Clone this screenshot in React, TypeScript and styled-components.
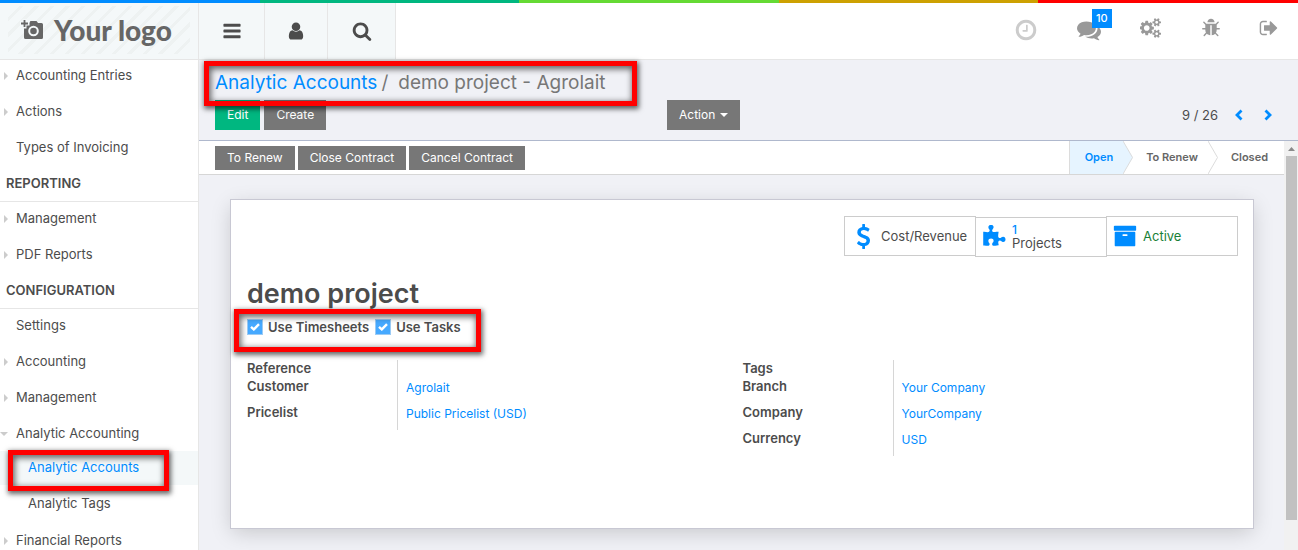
import React from "react";
import styled, { createGlobalStyle, css } from "styled-components";

const Global = createGlobalStyle`
  *, *::before, *::after { box-sizing: border-box; }
  html, body { margin: 0; height: 100%; }
  body {
    font-family: Inter, "Liberation Sans", sans-serif;
    font-size: 13px;
    line-height: 18px;
    color: #4c4c4c;
    background: #fff;
    overflow: hidden;
  }
  #root { height: 100%; }
  a { color: #008cff; text-decoration: none; }
  button { font: inherit; border: 0; margin: 0; padding: 0; cursor: pointer; }
  svg { display: block; flex: none; }
`;

const paths = {
  bars: "M1664 1344v128q0 26-19 45t-45 19h-1408q-26 0-45-19t-19-45v-128q0-26 19-45t45-19h1408q26 0 45 19t19 45zm0-512v128q0 26-19 45t-45 19h-1408q-26 0-45-19t-19-45v-128q0-26 19-45t45-19h1408q26 0 45 19t19 45zm0-512v128q0 26-19 45t-45 19h-1408q-26 0-45-19t-19-45v-128q0-26 19-45t45-19h1408q26 0 45 19t19 45z",
  user: "M1536 1399q0 109-62.5 187t-150.5 78h-854q-88 0-150.5-78t-62.5-187q0-85 8.5-160.5t31.5-152 58.5-131 94-89 134.5-34.5q131 128 313 128t313-128q76 0 134.5 34.5t94 89 58.5 131 31.5 152 8.5 160.5zm-256-887q0 159-112.5 271.5t-271.5 112.5-271.5-112.5-112.5-271.5 112.5-271.5 271.5-112.5 271.5 112.5 112.5 271.5z",
  search: "M1216 832q0-185-131.5-316.5t-316.5-131.5-316.5 131.5-131.5 316.5 131.5 316.5 316.5 131.5 316.5-131.5 131.5-316.5zm512 832q0 52-38 90t-90 38q-54 0-90-38l-343-342q-179 124-399 124-143 0-273.5-55.5t-225-150-150-225-55.5-273.5 55.5-273.5 150-225 225-150 273.5-55.5 273.5 55.5 225 150 150 225 55.5 273.5q0 220-124 399l343 343q37 37 37 90z",
  clock: "M1024 544v448q0 14-9 23t-23 9h-320q-14 0-23-9t-9-23v-64q0-14 9-23t23-9h224v-352q0-14 9-23t23-9h64q14 0 23 9t9 23zm416 352q0-148-73-273t-198-198-273-73-273 73-198 198-73 273 73 273 198 198 273 73 273-73 198-198 73-273zm224 0q0 209-103 385.5t-279.5 279.5-385.5 103-385.5-103-279.5-279.5-103-385.5 103-385.5 279.5-279.5 385.5-103 385.5 103 279.5 279.5 103 385.5z",
  comments: "M1408 768q0 139-94 257t-256.5 186.5-353.5 68.5q-86 0-176-16-124 88-278 128-36 9-86 16h-3q-11 0-20.5-8t-11.5-21q-1-3-1-6.5t.5-6.5 2-6l2.5-5t3.5-5.5 4-5 4.5-5 4-4.5q5-6 23-25t26-29.5 22.5-29 25-38.5 20.5-44q-124-72-195-177t-71-224q0-139 94-257t256.5-186.5 353.5-68.5 353.5 68.5 256.5 186.5 94 257zm384 256q0 120-71 224.5t-195 176.5q10 24 20.5 44t25 38.5 22.5 29 26 29.5 23 25q1 1 4 4.5t4.5 5 4 5 3.5 5.5l2.5 5t2 6 .5 6.5-1 6.5q-3 14-13 22t-22 7q-50-7-86-16-154-40-278-128-90 16-176 16-271 0-472-132 58 4 88 4 161 0 309-45t264-129q125-92 192-212t67-254q0-77-23-152 129 71 204 178t75 230z",
  cogs: "M832 896q0-106-75-181t-181-75-181 75-75 181 75 181 181 75 181-75 75-181zm768 512q0-52-38-90t-90-38-90 38-38 90q0 53 37.5 90.5t90.5 37.5 90.5-37.5 37.5-90.5zm0-1024q0-52-38-90t-90-38-90 38-38 90q0 53 37.5 90.5t90.5 37.5 90.5-37.5 37.5-90.5zm-384 421v185q0 10-7 19.5t-16 10.5l-155 24q-11 35-32 76 34 48 90 115 7 11 7 20 0 12-7 19-23 30-82.5 89.5t-78.5 59.5q-11 0-21-7l-115-90q-37 19-77 31-11 108-23 155-7 24-30 24h-186q-11 0-20-7.5t-10-17.5l-23-153q-34-10-75-31l-118 89q-7 7-20 7-11 0-21-8-144-133-144-160 0-9 7-19 10-14 41-53t47-61q-23-44-35-82l-152-24q-10-1-17-9.5t-7-19.5v-185q0-10 7-19.5t16-10.5l155-24q11-35 32-76-34-48-90-115-7-11-7-20 0-12 7-20 22-30 82-89t79-59q11 0 21 7l115 90q34-18 77-32 11-108 23-154 7-24 30-24h186q11 0 20 7.5t10 17.5l23 153q34 10 75 31l118-89q8-7 20-7 11 0 21 8 144 133 144 160 0 8-7 19-12 16-42 54t-45 60q23 48 34 82l152 23q10 2 17 10.5t7 19.5zm640 533v140q0 16-149 31-12 27-30 52 51 113 51 138 0 4-4 7-122 71-124 71-8 0-46-47t-52-68q-20 2-30 2t-30-2q-14 21-52 68t-46 47q-2 0-124-71-4-3-4-7 0-25 51-138-18-25-30-52-149-15-149-31v-140q0-16 149-31 13-29 30-52-51-113-51-138 0-4 4-7 4-2 35-20t59-34 30-16q8 0 46 46.5t52 67.5q20-2 30-2t30 2q51-71 92-112l6-2q4 0 124 70 4 3 4 7 0 25-51 138 17 23 30 52 149 15 149 31zm0-1024v140q0 16-149 31-12 27-30 52 51 113 51 138 0 4-4 7-122 71-124 71-8 0-46-47t-52-68q-20 2-30 2t-30-2q-14 21-52 68t-46 47q-2 0-124-71-4-3-4-7 0-25 51-138-18-25-30-52-149-15-149-31v-140q0-16 149-31 13-29 30-52-51-113-51-138 0-4 4-7 4-2 35-20t59-34 30-16q8 0 46 46.5t52 67.5q20-2 30-2t30 2q51-71 92-112l6-2q4 0 124 70 4 3 4 7 0 25-51 138 17 23 30 52 149 15 149 31z",
  bug: "M1696 960q0 26-19 45t-45 19h-224q0 171-67 290l208 209q19 19 19 45t-19 45q-18 19-45 19t-45-19l-198-197q-5 5-15 13t-42 28.5-65 36.5-82 29-97 13v-896h-128v896q-51 0-101.5-13.5t-87-33-66-39-43.5-32.5l-15-14-183 207q-20 21-48 21-24 0-43-16-19-18-20.5-44.5t15.5-46.5l202-227q-58-114-58-274h-224q-26 0-45-19t-19-45 19-45 45-19h224v-294l-173-173q-19-19-19-45t19-45 45-19 45 19l173 173h844l173-173q19-19 45-19t45 19 19 45-19 45l-173 173v294h224q26 0 45 19t19 45zm-480-576h-640q0-133 93.5-226.5t226.5-93.5 226.5 93.5 93.5 226.5z",
  signOut: "M704 1440q0 4 1 20t.5 26.5-3 23.5-10 19.5-20.5 6.5h-320q-119 0-203.5-84.5t-84.5-203.5v-704q0-119 84.5-203.5t203.5-84.5h320q13 0 22.5 9.5t9.5 22.5q0 4 1 20t.5 26.5-3 23.5-10 19.5-20.5 6.5h-320q-66 0-113 47t-47 113v704q0 66 47 113t113 47h312l11.5 1 11.5 3 8 5.5 7 9 2 13.5zm928-544q0 26-19 45l-544 544q-19 19-45 19t-45-19-19-45v-288h-448q-26 0-45-19t-19-45v-384q0-26 19-45t45-19h448v-288q0-26 19-45t45-19 45 19l544 544q19 19 19 45z",
  dollar: "M1362 1185q0 153-99.5 263.5t-258.5 136.5v175q0 14-9 23t-23 9h-135q-13 0-22.5-9.5t-9.5-22.5v-175q-66-9-127.5-31t-101.5-44.5-74-48-46.5-37.5-17.5-18q-17-21-2-41l103-135q7-10 23-12 15-2 24 9l2 2q113 99 243 125 37 8 74 8 81 0 142.5-43t61.5-122q0-28-15-53t-33.5-42-58.5-37.5-66-32-80-32.5q-39-16-61.5-25t-61.5-26.5-62.5-31-56.5-35.5-53.5-42.5-43.5-49-35.5-58-21-66.5-8.5-78q0-138 98-242t255-134v-180q0-13 9.5-22.5t22.5-9.5h135q14 0 23 9t9 23v176q57 6 110.5 23t87 33.5 63.5 37.5 39 29 15 14q17 18 5 38l-81 146q-8 15-23 16-14 3-27-7-3-3-14.5-12t-39-26.5-58.5-32-74.5-26-85.5-11.5q-95 0-155 43t-60 111q0 26 8.5 48t29.5 41.5 39.5 33 56 31 60.5 27 70 27.5q53 20 81 31.5t76 35 75.5 42.5 62 50 53 63.5 31.5 76.5 13 94z",
  puzzle: "M1755 1083q0 81-44.5 135t-123.5 54q-41 0-77.5-17.5t-59-38-56.5-38-71-17.5q-110 0-110 124 0 39 16 115t15 115v5q-22 0-33 1-34 3-97.5 11.5t-115.5 13.5-98 5q-61 0-103-26.5t-42-83.5q0-37 17.5-71t38-56.5 38-59 17.5-77.5q0-79-54-123.5t-135-44.5q-84 0-143 45.5t-59 127.5q0 43 15 83t33.5 64.5 33.5 53 15 50.5q0 45-46 89-37 35-117 35-95 0-245-24-9-2-27.5-4t-27.5-4l-13-2q-1 0-3-1-2 0-2-1v-1024q2 1 17.5 3.5t34 5 21.5 3.5q150 24 245 24 80 0 117-35 46-44 46-89 0-22-15-50.5t-33.5-53-33.5-64.5-15-83q0-82 59-127.5t144-45.5q80 0 134 44.5t54 123.5q0 41-17.5 77.5t-38 59-38 56.5-17.5 71q0 57 42 83.5t103 26.5q64 0 180-15t163-17v2q-1 2-3.5 17.5t-5 34-3.5 21.5q-24 150-24 245 0 80 35 117 44 46 89 46 22 0 50.5-15t53-33.5 64.5-33.5 83-15q82 0 127.5 59t45.5 143z",
  archive: "M1088 832q0-26-19-45t-45-19h-256q-26 0-45 19t-19 45 19 45 45 19h256q26 0 45-19t19-45zm576-192v960q0 26-19 45t-45 19h-1408q-26 0-45-19t-19-45v-960q0-26 19-45t45-19h1408q26 0 45 19t19 45zm64-448v256q0 26-19 45t-45 19h-1536q-26 0-45-19t-19-45v-256q0-26 19-45t45-19h1536q26 0 45 19t19 45z",
};

type IconName = keyof typeof paths;

function Icon({ name, size, wide = false }: { name: IconName; size: number; wide?: boolean }) {
  return (
    <svg width={wide ? size + 2 : size} height={size} viewBox={wide ? "0 0 1920 1792" : "0 0 1792 1792"} fill="currentColor" aria-hidden="true">
      <path d={paths[name]} />
    </svg>
  );
}

const Shell = styled.div`
  display: flex;
  flex-direction: column;
  height: 100vh;
  overflow: hidden;
`;

const ColorStrip = styled.div`
  flex: none;
  height: 3px;
  background: linear-gradient(to right, #008cff 20%, #00b780 20% 40%, #65da34 40% 60%, #cda101 60% 80%, #ff0000 80%);
`;

const TopBar = styled.header`
  display: flex;
  flex: none;
  height: 57px;
  border-bottom: 1px solid #e6e6e6;
`;

const Logo = styled.a`
  display: flex;
  align-items: center;
  flex: none;
  width: 199px;
  padding: 3px 8px 5px;
  background: #f4f8f9;
  border-right: 1px solid #e6e6e6;
`;

const LogoPlate = styled.span`
  display: flex;
  align-items: center;
  gap: 10px;
  width: 100%;
  height: 48px;
  padding-left: 12px;
  color: #666;
  background: repeating-linear-gradient(135deg, #f4f8f9 0 8px, #eef2f2 8px 11px);
  font: 900 28px/36px Lato, sans-serif;
  white-space: nowrap;
`;

const NavButton = styled.button<{ $width: number }>`
  display: flex;
  align-items: center;
  justify-content: center;
  width: ${(p) => p.$width}px;
  color: #4c4c4c;
  background: #f4f8f9;
  border-right: 1px solid #e6e6e6;
`;

const Systray = styled.div`
  display: flex;
  margin-left: auto;
`;

const TrayButton = styled.button<{ $width: number; $low?: boolean; $pale?: boolean }>`
  position: relative;
  display: flex;
  align-items: center;
  justify-content: center;
  width: ${(p) => p.$width}px;
  height: ${(p) => (p.$low ? 54 : 50)}px;
  background: none;
  color: ${(p) => (p.$pale ? "#ccc" : "#999")};
`;

const Badge = styled.span`
  position: absolute;
  top: 6px;
  left: 35px;
  padding: 0 4px;
  background: #008cff;
  color: #fff;
  font-size: 11px;
  line-height: 19px;
  font-weight: 500;
`;

const Body = styled.div`
  display: flex;
  flex: 1;
  min-height: 0;
`;

const Sidebar = styled.nav`
  flex: none;
  width: 199px;
  overflow: hidden;
  background: #fff;
  border-right: 1px solid #e6e6e6;
`;

const MenuItem = styled.a`
  display: flex;
  align-items: flex-start;
  height: 36px;
  padding-top: 6px;
  color: #4c4c4c;
`;

const Marker = styled.span<{ $open?: boolean }>`
  flex: none;
  width: 16px;
  padding: 6px 0 0 ${(p) => (p.$open ? 0 : 4)}px;
  color: #ccc;
`;

const MenuHeading = styled.h2`
  height: 34px;
  margin: 0 0 1px;
  padding: 6px 6px 0;
  border-bottom: 1px solid #e6e6e6;
  font-size: 13px;
  line-height: 18px;
  font-weight: 600;
`;

const SubMenu = styled.div`
  display: grid;
  gap: 2px;
  margin-top: -3px;
  padding-bottom: 4px;
`;

const SubItem = styled.a<{ $active?: boolean }>`
  position: relative;
  height: 34px;
  padding-left: 28px;
  line-height: 32px;
  color: ${(p) => (p.$active ? "#008cff" : "#4c4c4c")};
  background: ${(p) => (p.$active ? "#f4f8f9" : "#fff")};
`;

const Highlight = styled.span<{ $inset: string }>`
  position: absolute;
  inset: ${(p) => p.$inset};
  z-index: 2;
  border: 5px solid #ff0000;
  box-shadow: 1px 2px 5px 1px rgba(0, 0, 0, 0.6), inset 1px 2px 6px 1px rgba(0, 0, 0, 0.6);
  pointer-events: none;
`;

const Main = styled.main`
  display: flex;
  flex-direction: column;
  flex: 1;
  min-width: 0;
  background: #f0f1f6;
`;

const ControlPanel = styled.div`
  flex: none;
  padding: 10px 16px;
  border-bottom: 1px solid #afb8cd;
`;

const Breadcrumb = styled.div`
  position: relative;
  display: inline-flex;
  gap: 4px;
  height: 30px;
  font-size: 19px;
  line-height: 26px;
  color: #777;
  white-space: nowrap;
`;

const Crumb = styled.span`
  padding-left: 6px;
`;

const ControlRow = styled.div`
  display: grid;
  grid-template-columns: 452px 1fr auto;
  align-items: center;
`;

const ButtonGroup = styled.div<{ $gap: number }>`
  display: flex;
  gap: ${(p) => p.$gap}px;
`;

const Button = styled.button<{ $primary?: boolean; $small?: boolean }>`
  display: flex;
  align-items: center;
  gap: 5px;
  height: ${(p) => (p.$small ? 24 : 30)}px;
  padding: 0 12px;
  font-size: 12px;
  color: #fff;
  background: ${(p) => (p.$primary ? "#00b780" : "#777")};
  white-space: nowrap;
`;

const Pager = styled.div`
  display: flex;
  align-items: center;
`;

const PagerButton = styled.button`
  display: flex;
  align-items: center;
  justify-content: center;
  width: 29px;
  height: 24px;
  color: #008cff;
  background: none;
`;

const PagerCount = styled.span`
  margin-right: 6px;
`;

const Content = styled.div`
  display: flex;
  flex: 1;
  min-height: 0;
`;

const FormView = styled.div`
  flex: 1;
  min-width: 0;
  overflow: hidden;
`;

const StatusBar = styled.div`
  display: flex;
  align-items: center;
  justify-content: space-between;
  height: 34px;
  padding-left: 16px;
  background: #fff;
  border-bottom: 1px solid #d6d6d6;
`;

const Stages = styled.div`
  display: flex;
  align-self: stretch;
`;

const Stage = styled.span<{ $active?: boolean; $last?: boolean }>`
  padding: 0 ${(p) => (p.$last ? 16 : 10)}px 0 ${(p) => (p.$active ? 15 : 13)}px;
  font-size: 11px;
  line-height: 32px;
  font-weight: 600;
  color: #666;
  white-space: nowrap;
  ${(p) =>
    p.$active &&
    css`
      color: #008cff;
      background: #e6f4ff;
      border-left: 1px solid #dcdcdc;
    `}
`;

const Sheet = styled.section`
  margin: 24px 30px 20px 31px;
  padding: 16px 15px 72px 16px;
  background: #fff;
  border: 1px solid #c8c8d3;
  box-shadow: 0 5px 20px -2px rgba(0, 0, 0, 0.18);
`;

const StatRow = styled.div`
  display: flex;
  justify-content: flex-end;
`;

const StatButton = styled.button<{ $success?: boolean; $shift?: boolean }>`
  display: flex;
  align-items: center;
  width: 132px;
  height: 40px;
  margin: ${(p) => (p.$shift ? "1px -1px -1px" : "0")};
  background: #fff;
  border: 1px solid #ccc;
  color: ${(p) => (p.$success ? "#1a7f37" : "#4c4c4c")};
  text-align: left;
  line-height: 15px;
  white-space: nowrap;
`;

const StatIcon = styled.span`
  display: flex;
  justify-content: center;
  flex: none;
  width: 36px;
  color: #008cff;
`;

const StatValue = styled.span`
  display: block;
  color: #008cff;
  font-size: 12px;
  font-weight: 500;
  line-height: 13px;
`;

const Title = styled.h1`
  margin: 20px 0 7px;
  font-size: 27px;
  line-height: 36px;
  font-weight: 600;
`;

const Options = styled.div`
  position: relative;
  display: inline-flex;
  gap: 6px;
`;

const Option = styled.label`
  display: flex;
  align-items: center;
  gap: 5px;
  font-size: 13px;
  line-height: 16px;
  font-weight: 600;
`;

const CheckWrap = styled.span`
  display: grid;
  place-items: center;
  svg, input { grid-area: 1 / 1; }
  svg { pointer-events: none; z-index: 1; }
`;

const CheckBox = styled.input`
  appearance: none;
  width: 16px;
  height: 16px;
  margin: 0;
  border: 1px solid #ccc;
  background: #fff;
  &:checked { background: #46a9ff; border-color: #9bcbf5; }
`;

const Groups = styled.div`
  display: grid;
  grid-template-columns: 1fr 1fr;
  align-items: start;
  margin-top: 21px;
`;

const Fields = styled.dl`
  display: grid;
  grid-template-columns: 151px 1fr;
  margin: 0;
`;

const FieldLabel = styled.dt<{ $empty?: boolean }>`
  height: ${(p) => (p.$empty ? 18 : 26)}px;
  border-right: 1px solid #d6d6d6;
  font-weight: 600;
  font-size: 13px;
  line-height: 16px;
`;

const FieldValue = styled.dd`
  margin: 0;
  padding-left: 8px;
  font-size: 12px;
  line-height: 20px;
`;

const ScrollTrack = styled.div`
  display: flex;
  flex-direction: column;
  align-items: center;
  flex: none;
  width: 14px;
  padding: 6px 0 30px;
  gap: 5px;
  background: #f1f1f1;
`;

const ScrollThumb = styled.div`
  flex: 1;
  width: 11px;
  background: #c1c1c1;
`;

function Arrow({ open = false }: { open?: boolean }) {
  return open ? (
    <svg width="8" height="8" viewBox="0 0 8 8" fill="currentColor"><path d="M0 2h8L4 6z" /></svg>
  ) : (
    <svg width="5" height="8" viewBox="0 0 5 8" fill="currentColor"><path d="M0 0l4 4-4 4z" /></svg>
  );
}

function StageArrow({ fill = "#fff" }: { fill?: string }) {
  return (
    <svg width="10" height="33" viewBox="0 0 10 33">
      <path d="M0 0L10 16.500L0 33z" fill={fill} />
      <path d="M0 0L9.500 16.500L0 33" fill="none" stroke="#dcdcdc" />
    </svg>
  );
}

function Chevron({ flip = false }: { flip?: boolean }) {
  return (
    <svg width="8" height="12" viewBox="0 0 8 12" fill="none" stroke="currentColor" strokeWidth="2.800">
      <path d={flip ? "M1.500 1.500L6 6L1.500 10.500" : "M6.500 1.500L2 6L6.500 10.500"} />
    </svg>
  );
}

function Entry({ label, leaf, open }: { label: string; leaf?: boolean; open?: boolean }) {
  return (
    <MenuItem href="#">
      <Marker $open={open}>{!leaf && <Arrow open={open} />}</Marker>
      {label}
    </MenuItem>
  );
}

function CheckOption({ id, label }: { id: string; label: string }) {
  return (
    <Option htmlFor={id}>
      <CheckWrap>
        <CheckBox id={id} type="checkbox" defaultChecked />
        <svg width="10" height="8" viewBox="0 0 10 8" fill="none" stroke="#fff" strokeWidth="2.400">
          <path d="M1 3.800L3.800 6.400L9 1.200" />
        </svg>
      </CheckWrap>
      {label}
    </Option>
  );
}

function FieldGroup({ rows }: { rows: [string, string?][] }) {
  return (
    <Fields>
      {rows.map(([label, value]) => (
        <React.Fragment key={label}>
          <FieldLabel $empty={!value}>{label}</FieldLabel>
          <FieldValue>{value && <a href="#">{value}</a>}</FieldValue>
        </React.Fragment>
      ))}
    </Fields>
  );
}

export default function App() {
  return (
    <Shell>
      <Global />
      <ColorStrip />
      <TopBar>
        <Logo href="#">
          <LogoPlate>
            <svg width="24" height="22" viewBox="0 0 24 22" fill="none">
              <path d="M4 4h5l1.500-2h6L18 4h3.500q1.500 0 1.500 1.500v13q0 1.500-1.500 1.500h-16Q4 20 4 18.500z" fill="#666" />
              <circle cx="13.500" cy="12" r="4.300" stroke="#f4f8f9" strokeWidth="2" />
              <path d="M4.500 0v9.500M0 4.500h9.500" stroke="#f4f8f9" strokeWidth="4" />
              <path d="M4.500 1v7M1 4.500h7" stroke="#666" strokeWidth="1.800" />
            </svg>
            Your logo
          </LogoPlate>
        </Logo>
        <NavButton $width={66} aria-label="Menu"><Icon name="bars" size={20} /></NavButton>
        <NavButton $width={63} aria-label="User"><Icon name="user" size={20} /></NavButton>
        <NavButton $width={68} aria-label="Search"><Icon name="search" size={20} /></NavButton>
        <Systray>
          <TrayButton $width={63} $low $pale aria-label="Activities"><Icon name="clock" size={24} /></TrayButton>
          <TrayButton $width={63} $low aria-label="Messages">
            <Icon name="comments" size={24} />
            <Badge>10</Badge>
          </TrayButton>
          <TrayButton $width={62} aria-label="Settings"><Icon name="cogs" size={20} wide /></TrayButton>
          <TrayButton $width={58} aria-label="Debug"><Icon name="bug" size={20} /></TrayButton>
          <TrayButton $width={58} aria-label="Log out"><Icon name="signOut" size={20} /></TrayButton>
        </Systray>
      </TopBar>
      <Body>
        <Sidebar>
          <Entry label="Accounting Entries" />
          <Entry label="Actions" />
          <Entry label="Types of Invoicing" leaf />
          <MenuHeading>REPORTING</MenuHeading>
          <Entry label="Management" />
          <Entry label="PDF Reports" />
          <MenuHeading>CONFIGURATION</MenuHeading>
          <Entry label="Settings" leaf />
          <Entry label="Accounting" />
          <Entry label="Management" />
          <Entry label="Analytic Accounting" open />
          <SubMenu>
            <SubItem href="#" $active>
              Analytic Accounts
              <Highlight $inset="-1px 29px -6px 8px" />
            </SubItem>
            <SubItem href="#">Analytic Tags</SubItem>
          </SubMenu>
          <Entry label="Financial Reports" />
        </Sidebar>
        <Main>
          <ControlPanel>
            <Breadcrumb>
              <a href="#">Analytic Accounts</a>
              <span>/</span>
              <Crumb>demo project - Agrolait</Crumb>
              <Highlight $inset="-9px -32px -6px -11px" />
            </Breadcrumb>
            <ControlRow>
              <ButtonGroup $gap={4}>
                <Button $primary>Edit</Button>
                <Button>Create</Button>
              </ButtonGroup>
              <ButtonGroup $gap={4}>
                <Button>
                  Action
                  <svg width="8" height="4" viewBox="0 0 8 4" fill="currentColor"><path d="M0 0h8L4 4z" /></svg>
                </Button>
              </ButtonGroup>
              <Pager>
                <PagerCount>9 / 26</PagerCount>
                <PagerButton aria-label="Previous"><Chevron /></PagerButton>
                <PagerButton aria-label="Next"><Chevron flip /></PagerButton>
              </Pager>
            </ControlRow>
          </ControlPanel>
          <Content>
            <FormView>
              <StatusBar>
                <ButtonGroup $gap={3}>
                  <Button $small>To Renew</Button>
                  <Button $small>Close Contract</Button>
                  <Button $small>Cancel Contract</Button>
                </ButtonGroup>
                <Stages>
                  <Stage $active>Open</Stage>
                  <StageArrow fill="#e6f4ff" />
                  <Stage>To Renew</Stage>
                  <StageArrow />
                  <Stage $last>Closed</Stage>
                </Stages>
              </StatusBar>
              <Sheet>
                <StatRow>
                  <StatButton>
                    <StatIcon><Icon name="dollar" size={25} /></StatIcon>
                    Cost/Revenue
                  </StatButton>
                  <StatButton $shift>
                    <StatIcon><Icon name="puzzle" size={24} /></StatIcon>
                    <span><StatValue>1</StatValue>Projects</span>
                  </StatButton>
                  <StatButton $success>
                    <StatIcon><Icon name="archive" size={24} /></StatIcon>
                    Active
                  </StatButton>
                </StatRow>
                <Title>demo project</Title>
                <Options>
                  <CheckOption id="use-timesheets" label="Use Timesheets" />
                  <CheckOption id="use-tasks" label="Use Tasks" />
                  <Highlight $inset="-10px -20px -17px -13px" />
                </Options>
                <Groups>
                  <FieldGroup rows={[["Reference"], ["Customer", "Agrolait"], ["Pricelist", "Public Pricelist (USD)"]]} />
                  <FieldGroup rows={[["Tags"], ["Branch", "Your Company"], ["Company", "YourCompany"], ["Currency", "USD"]]} />
                </Groups>
              </Sheet>
            </FormView>
            <ScrollTrack>
              <svg width="7" height="4" viewBox="0 0 7 4" fill="#8a8a8a"><path d="M0 4h7L3.500 0z" /></svg>
              <ScrollThumb />
            </ScrollTrack>
          </Content>
        </Main>
      </Body>
    </Shell>
  );
}
